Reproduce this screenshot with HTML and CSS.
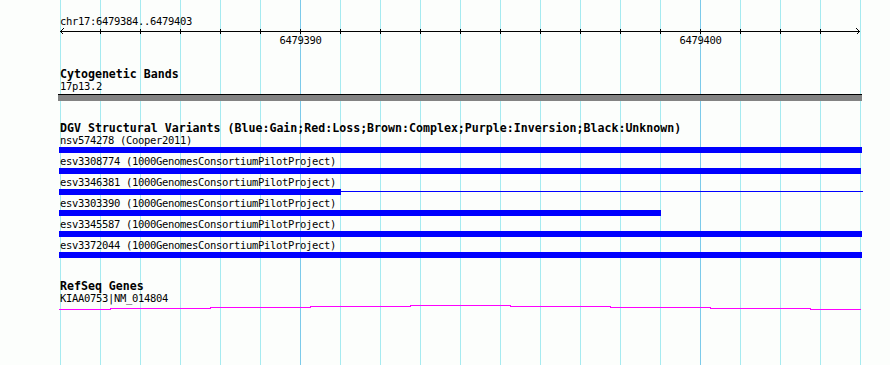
FILE: index.html
```html
<!DOCTYPE html>
<html lang="en">

<head>
    <meta charset="UTF-8">
    <title>chr17:6479384..6479403</title>
    <link rel="stylesheet" href="styles.css">
</head>

<body>
    <div class="panel">
        <div class="ruler-label">chr17:6479384..6479403</div>
        <svg class="ruler" width="801" height="21" viewBox="0 0 801 21">
            <line x1="0" y1="4.5" x2="800" y2="4.5" stroke="#000" />
            <polyline points="3.5,1.5 0.5,4.5 3.5,7.5" fill="none" stroke="#000" />
            <polyline points="796.5,1.5 799.5,4.5 796.5,7.5" fill="none" stroke="#000" />
            <g fill="#000">
                <rect x="40" y="2" width="1" height="5" />
                <rect x="80" y="2" width="1" height="5" />
                <rect x="120" y="2" width="1" height="5" />
                <rect x="160" y="2" width="1" height="5" />
                <rect x="200" y="2" width="1" height="5" />
                <rect x="240" y="2" width="1" height="5" />
                <rect x="280" y="2" width="1" height="5" />
                <rect x="320" y="2" width="1" height="5" />
                <rect x="360" y="2" width="1" height="5" />
                <rect x="400" y="2" width="1" height="5" />
                <rect x="440" y="2" width="1" height="5" />
                <rect x="480" y="2" width="1" height="5" />
                <rect x="520" y="2" width="1" height="5" />
                <rect x="560" y="2" width="1" height="5" />
                <rect x="600" y="2" width="1" height="5" />
                <rect x="640" y="2" width="1" height="5" />
                <rect x="680" y="2" width="1" height="5" />
                <rect x="720" y="2" width="1" height="5" />
                <rect x="760" y="2" width="1" height="5" />
            </g>
            <text class="tick-text" x="240.5" y="17" text-anchor="middle">6479390</text>
            <text class="tick-text" x="640.5" y="17" text-anchor="middle">6479400</text>
        </svg>

        <div class="track cyto">
            <div class="track-title">Cytogenetic Bands</div>
            <div class="label">17p13.2</div>
            <div class="band"></div>
        </div>

        <div class="track dgv">
            <div class="track-title">DGV Structural Variants (Blue:Gain;Red:Loss;Brown:Complex;Purple:Inversion;Black:Unknown)</div>
            <div class="feature">
                <div class="label">nsv574278 (Cooper2011)</div>
                <div class="bar"></div>
            </div>
            <div class="feature">
                <div class="label">esv3308774 (1000GenomesConsortiumPilotProject)</div>
                <div class="bar short-1"></div>
            </div>
            <div class="feature">
                <div class="label">esv3346381 (1000GenomesConsortiumPilotProject)</div>
                <div class="bar-split">
                    <div class="bar" style="width: 282px"></div>
                    <div class="bar-tail"></div>
                </div>
            </div>
            <div class="feature">
                <div class="label">esv3303390 (1000GenomesConsortiumPilotProject)</div>
                <div class="bar" style="width: 602px"></div>
            </div>
            <div class="feature">
                <div class="label">esv3345587 (1000GenomesConsortiumPilotProject)</div>
                <div class="bar"></div>
            </div>
            <div class="feature">
                <div class="label">esv3372044 (1000GenomesConsortiumPilotProject)</div>
                <div class="bar"></div>
            </div>
        </div>

        <div class="track refseq">
            <div class="track-title">RefSeq Genes</div>
            <div class="label">KIAA0753|NM_014804</div>
            <svg class="gene" width="803" height="6" viewBox="-1 0 803 6">
                <polyline fill="none" stroke="#ff00ff" stroke-width="1"
                    points="-1,5.5 50,5.5 50,4.5 150,4.5 150,3.5 250,3.5 250,2.5 350,2.5 350,1.5 450,1.5 450,2.5 550,2.5 550,3.5 650,3.5 650,4.5 750,4.5 750,5.5 801,5.5" />
            </svg>
        </div>
    </div>
</body>

</html>
```

FILE: styles.css
```css
body {
    margin: 0;
    background-color: #fcfefc;
    font-family: "DejaVu Sans Mono", monospace;
    color: #000;
}

.panel {
    width: 801px;
    height: 365px;
    padding-left: 60px;
    background-color: #fcfefc;
    background-image:
        linear-gradient(to right, transparent 240px, #7ccaea 240px, #7ccaea 241px, transparent 241px),
        linear-gradient(to right, transparent 640px, #7ccaea 640px, #7ccaea 641px, transparent 641px),
        linear-gradient(to right, #a6eaf0 1px, transparent 1px);
    background-size: 100% 100%, 100% 100%, 40px 100%;
    background-repeat: no-repeat, no-repeat, repeat-x;
    background-origin: content-box;
    background-clip: content-box;
}

.ruler-label {
    padding-top: 16px;
    height: 11px;
    font-size: 10.5px;
    letter-spacing: -0.32px;
    line-height: 11px;
}

.ruler {
    display: block;
    shape-rendering: crispEdges;
}

.tick-text {
    font-family: "DejaVu Sans Mono", monospace;
    font-size: 10.5px;
    letter-spacing: -0.32px;
}

.track-title {
    font-weight: bold;
    font-size: 11.6px;
    line-height: 12px;
    height: 12px;
    white-space: nowrap;
}

.label {
    font-size: 10.5px;
    letter-spacing: -0.32px;
    line-height: 11px;
    height: 11px;
    margin-top: 1px;
    white-space: nowrap;
}

.cyto {
    margin-top: 20px;
}

.band {
    margin-top: 2px;
    margin-left: -2px;
    width: 804px;
    height: 6px;
    border-top: 1px solid #000;
    background-color: #838383;
}

.dgv {
    margin-top: 21px;
}

.feature + .feature {
    margin-top: 3px;
}

.bar {
    margin-top: 1px;
    margin-left: -1px;
    width: 803px;
    height: 6px;
    background-color: #0000ff;
}

.bar.short-1 {
    width: 802px;
}

.bar-split {
    display: flex;
    align-items: flex-start;
    width: 803px;
}

.bar-tail {
    flex: 1;
    height: 1px;
    margin-top: 3px;
    background-color: #0000ff;
}

.refseq {
    margin-top: 22px;
}

.gene {
    display: block;
    margin-left: -1px;
    shape-rendering: crispEdges;
}
```
